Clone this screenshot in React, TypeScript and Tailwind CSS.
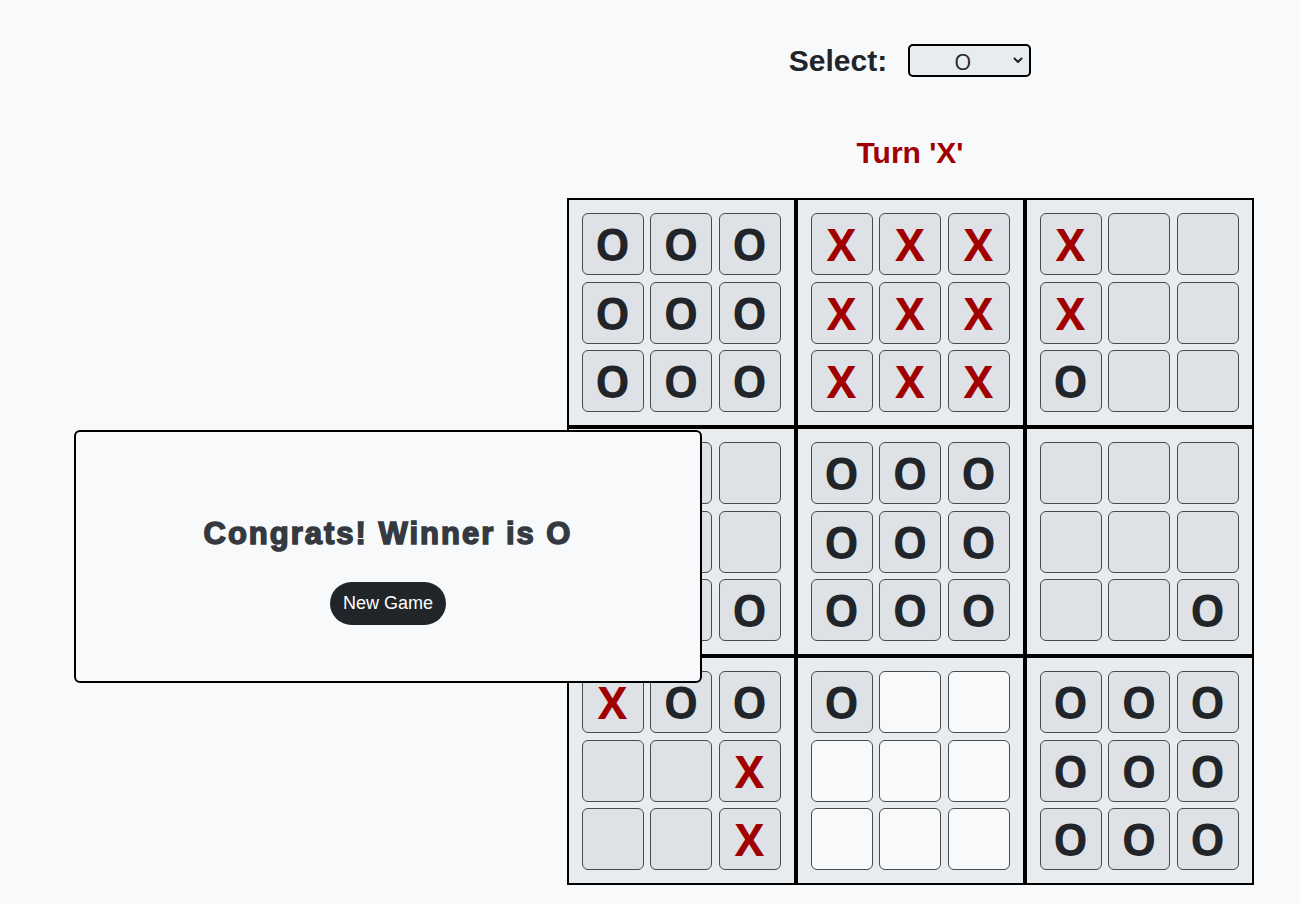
import { useState } from "react";

type Mark = "X" | "O" | "";

const parse = (s: string): Mark[] =>
  s.split("").map((c) => (c === "X" ? "X" : c === "O" ? "O" : ""));

const initialBoards: Mark[][] = [
  parse("OOOOOOOOO"),
  parse("XXXXXXXXX"),
  parse("X..X..O.."),
  parse("........O"),
  parse("OOOOOOOOO"),
  parse("........O"),
  parse("XOO..X..X"),
  parse("O........"),
  parse("OOOOOOOOO"),
];

const activeBoard = 7;

const Cell = ({ value, open }: { value: Mark; open: boolean }) => {
  const bg = open && !value ? "bg-[#f8f9fa]" : "bg-[#dee2e6]";
  const color = value === "X" ? "text-[#a00000]" : "text-[#212529]";
  return (
    <div
      className={`w-[62px] h-[62px] rounded-[6px] border border-[#4a4a4a] flex items-center justify-center text-[44px] leading-none font-bold ${bg} ${color}`}
      style={{ fontFamily: '"Open Sans", "Noto Sans", sans-serif' }}
    >
      {value}
    </div>
  );
};

const SubBoard = ({ cells, open }: { cells: Mark[]; open: boolean }) => (
  <div className="w-[229px] h-[229px] border-2 border-black bg-[#e9ecef] p-[13px] grid grid-cols-3 gap-[6.5px]">
    {cells.map((c, i) => (
      <Cell key={i} value={c} open={open} />
    ))}
  </div>
);

const App = () => {
  const [player, setPlayer] = useState<string>("O");

  return (
    <div
      className="relative min-h-screen bg-[#f8f9fa] text-[#212529]"
      style={{ fontFamily: '"Liberation Sans", Arial, sans-serif' }}
    >
      <div className="pl-[520px] pt-[44px] flex flex-col items-center">
        <div className="flex items-center h-[33px] gap-[21px]">
          <span className="text-[30px] font-bold leading-none">Select:</span>
          <div className="relative">
            <select
              value={player}
              onChange={(e) => setPlayer(e.target.value)}
              className="appearance-none w-[123px] h-[33px] border-2 border-black rounded-[5px] bg-[#e9ecef] text-[22px] leading-none text-center pr-[14px] outline-none"
              style={{ textAlignLast: "center", fontFamily: '"Open Sans", "Liberation Sans", sans-serif' }}
            >
              <option value="X">X</option>
              <option value="O">O</option>
            </select>
            <svg
              className="absolute right-[8px] top-[13px] pointer-events-none"
              width="10"
              height="7"
              viewBox="0 0 10 7"
            >
              <path d="M1.5 1.5 L5 5 L8.5 1.5" fill="none" stroke="#222" strokeWidth="2" strokeLinecap="round" strokeLinejoin="round" />
            </svg>
          </div>
        </div>

        <div className="mt-[58px] text-[30px] leading-[36px] font-bold text-[#a00000]">
          Turn 'X'
        </div>

        <div className="mt-[27px] grid grid-cols-3 w-[687px]">
          {initialBoards.map((b, i) => (
            <SubBoard key={i} cells={b} open={i === activeBoard} />
          ))}
        </div>
      </div>

      <div className="absolute left-[74px] top-[430px] w-[628px] h-[253px] border-2 border-black rounded-[6px] bg-[#f8f9fa] flex flex-col items-center pt-[83px]">
        <h2 className="text-[31px] leading-[37px] font-bold text-[#343a40] tracking-[2px] [-webkit-text-stroke:1.5px_#343a40]">
          Congrats! Winner is O
        </h2>
        <button className="mt-[30px] h-[43px] px-[13px] rounded-full bg-[#212529] text-white text-[18px]">
          New Game
        </button>
      </div>
    </div>
  );
};

export default App;
